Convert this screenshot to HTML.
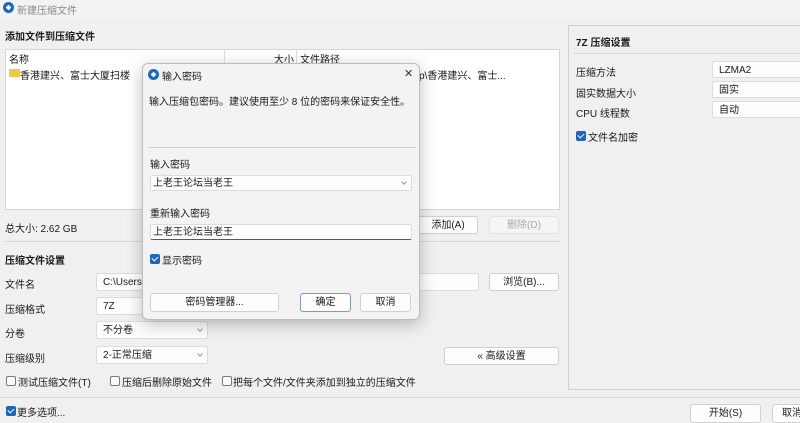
<!DOCTYPE html>
<html><head><meta charset="utf-8"><style>
*{box-sizing:border-box;margin:0;padding:0}
body{width:800px;height:423px;overflow:hidden;background:#f0f0f0;font-family:"Liberation Sans","Noto Sans CJK SC",sans-serif;font-size:10px;color:#1a1a1a;position:relative}
.a{position:absolute;white-space:nowrap}
.b{font-weight:bold}
.box{position:absolute;background:#fff;border:1px solid #d6d6d6}
.btn{position:absolute;background:#fdfdfd;border:1px solid #d0d0d0;border-radius:3px;text-align:center;line-height:17px}
.in{position:absolute;background:#fdfdfd;border:1px solid #dcdcdc;border-radius:2px;padding-left:6px;line-height:17px}
.cb{position:absolute;width:10px;height:10px;border:1px solid #777;border-radius:2px;background:#fff}
.cb.on{background:#1a67c0;border-color:#1a67c0}
.cb.on:after{content:"";position:absolute;left:2px;top:0px;width:3px;height:5px;border:solid #fff;border-width:0 1px 1px 0;transform:rotate(45deg)}
.chev{position:absolute;right:5px;top:5px;width:4px;height:4px;border:solid #999;border-width:0 1px 1px 0;transform:rotate(45deg)}
.sep{position:absolute;height:1px;background:#d6d6d6}
.ic{position:absolute;width:11px;height:11px;border-radius:50%;background:#1a67c0}
.ic:after{content:"";position:absolute;left:3px;top:3px;width:5px;height:5px;background:#fff;transform:rotate(45deg) scale(.8)}
</style></head><body>
<div style="position:absolute;left:0;top:0;width:800px;height:18px;background:#f3f3f3"></div>
<div class="ic" style="left:3px;top:2px"></div>
<div class="a" style="left:17px;top:2px;color:#888">新建压缩文件</div>
<div class="a b" style="left:5px;top:28px">添加文件到压缩文件</div>
<div class="box" style="left:5px;top:49px;width:555px;height:161px"></div>
<div class="a" style="left:9px;top:51px">名称</div>
<div class="a" style="left:224px;top:50px;width:1px;height:14px;background:#e0e0e0"></div>
<div class="a" style="left:274px;top:51px">大小</div>
<div class="a" style="left:296px;top:50px;width:1px;height:14px;background:#e0e0e0"></div>
<div class="a" style="left:300px;top:51px">文件路径</div>
<div class="a" style="left:9px;top:69px;width:11px;height:8px;background:#f2c744"></div>
<div class="a" style="left:20px;top:67px">香港建兴、富士大厦扫楼</div>
<div class="a" style="left:419px;top:67px">p\香港建兴、富士...</div>
<div class="a" style="left:5px;top:220px">总大小: 2.62 GB</div>
<div class="btn" style="left:418px;top:216px;width:60px;height:18px">添加(A)</div>
<div class="btn" style="left:489px;top:216px;width:70px;height:18px;color:#aaa;background:#f5f5f5;border-color:#e3e3e3">删除(D)</div>
<div class="sep" style="left:5px;top:241px;width:555px"></div>
<div class="a b" style="left:5px;top:252px">压缩文件设置</div>
<div class="a" style="left:5px;top:276px">文件名</div>
<div class="in" style="left:96px;top:273px;width:383px;height:18px">C:\Users\</div>
<div class="btn" style="left:489px;top:273px;width:70px;height:18px">浏览(B)...</div>
<div class="a" style="left:5px;top:301px">压缩格式</div>
<div class="in" style="left:96px;top:297px;width:100px;height:18px">7Z</div>
<div class="a" style="left:5px;top:325px">分卷</div>
<div class="in" style="left:96px;top:321px;width:112px;height:18px">不分卷<span class="chev"></span></div>
<div class="a" style="left:5px;top:350px">压缩级别</div>
<div class="in" style="left:96px;top:346px;width:112px;height:18px">2-正常压缩<span class="chev"></span></div>
<div class="btn" style="left:444px;top:347px;width:115px;height:18px">« 高级设置</div>
<div class="cb" style="left:6px;top:376px"></div><div class="a" style="left:18px;top:374px">测试压缩文件(T)</div>
<div class="cb" style="left:110px;top:376px"></div><div class="a" style="left:122px;top:374px">压缩后删除原始文件</div>
<div class="cb" style="left:222px;top:376px"></div><div class="a" style="left:233px;top:374px">把每个文件/文件夹添加到独立的压缩文件</div>
<div class="sep" style="left:0;top:397px;width:800px"></div>
<div class="cb on" style="left:6px;top:406px"></div><div class="a" style="left:17px;top:404px">更多选项...</div>
<div class="btn" style="left:690px;top:404px;width:71px;height:19px">开始(S)</div>
<div class="btn" style="left:772px;top:404px;width:40px;height:19px">取消</div>
<div style="position:absolute;left:568px;top:25px;width:240px;height:365px;border:1px solid #d0d0d0"></div>
<div class="a b" style="left:576px;top:34px">7Z 压缩设置</div>
<div class="sep" style="left:574px;top:53px;width:226px"></div>
<div class="a" style="left:576px;top:64px">压缩方法</div>
<div class="in" style="left:712px;top:61px;width:100px;height:17px">LZMA2</div>
<div class="a" style="left:576px;top:85px">固实数据大小</div>
<div class="in" style="left:712px;top:81px;width:100px;height:17px">固实</div>
<div class="a" style="left:576px;top:105px">CPU 线程数</div>
<div class="in" style="left:712px;top:101px;width:100px;height:17px">自动</div>
<div class="cb on" style="left:576px;top:131px"></div><div class="a" style="left:588px;top:129px">文件名加密</div>
<div style="position:absolute;left:142px;top:63px;width:278px;height:257px;background:#f3f3f3;border:1px solid #bdbdbd;border-radius:6px;box-shadow:0 4px 16px rgba(0,0,0,.25)"></div>
<div class="ic" style="left:148px;top:69px"></div>
<div class="a" style="left:162px;top:68px">输入密码</div>
<div class="a" style="left:404px;top:67px;font-size:11px;color:#333">✕</div>
<div class="a" style="left:149px;top:93px">输入压缩包密码。建议使用至少 8 位的密码来保证安全性。</div>
<div class="sep" style="left:149px;top:147px;width:267px;background:#d0d0d0"></div>
<div class="a" style="left:150px;top:156px">输入密码</div>
<div class="in" style="left:150px;top:175px;width:262px;height:16px;padding-left:2px;line-height:15px">上老王论坛当老王<span class="chev" style="top:4px"></span></div>
<div class="a" style="left:150px;top:205px">重新输入密码</div>
<div class="in" style="left:150px;top:224px;width:262px;height:16px;padding-left:2px;line-height:15px;border-bottom:1px solid #1a67c0">上老王论坛当老王</div>
<div class="cb on" style="left:150px;top:254px"></div><div class="a" style="left:162px;top:252px">显示密码</div>
<div class="btn" style="left:150px;top:293px;width:129px;height:19px">密码管理器...</div>
<div class="btn" style="left:300px;top:293px;width:51px;height:19px;border-color:#7a9cc6">确定</div>
<div class="btn" style="left:360px;top:293px;width:51px;height:19px">取消</div>
</body></html>
